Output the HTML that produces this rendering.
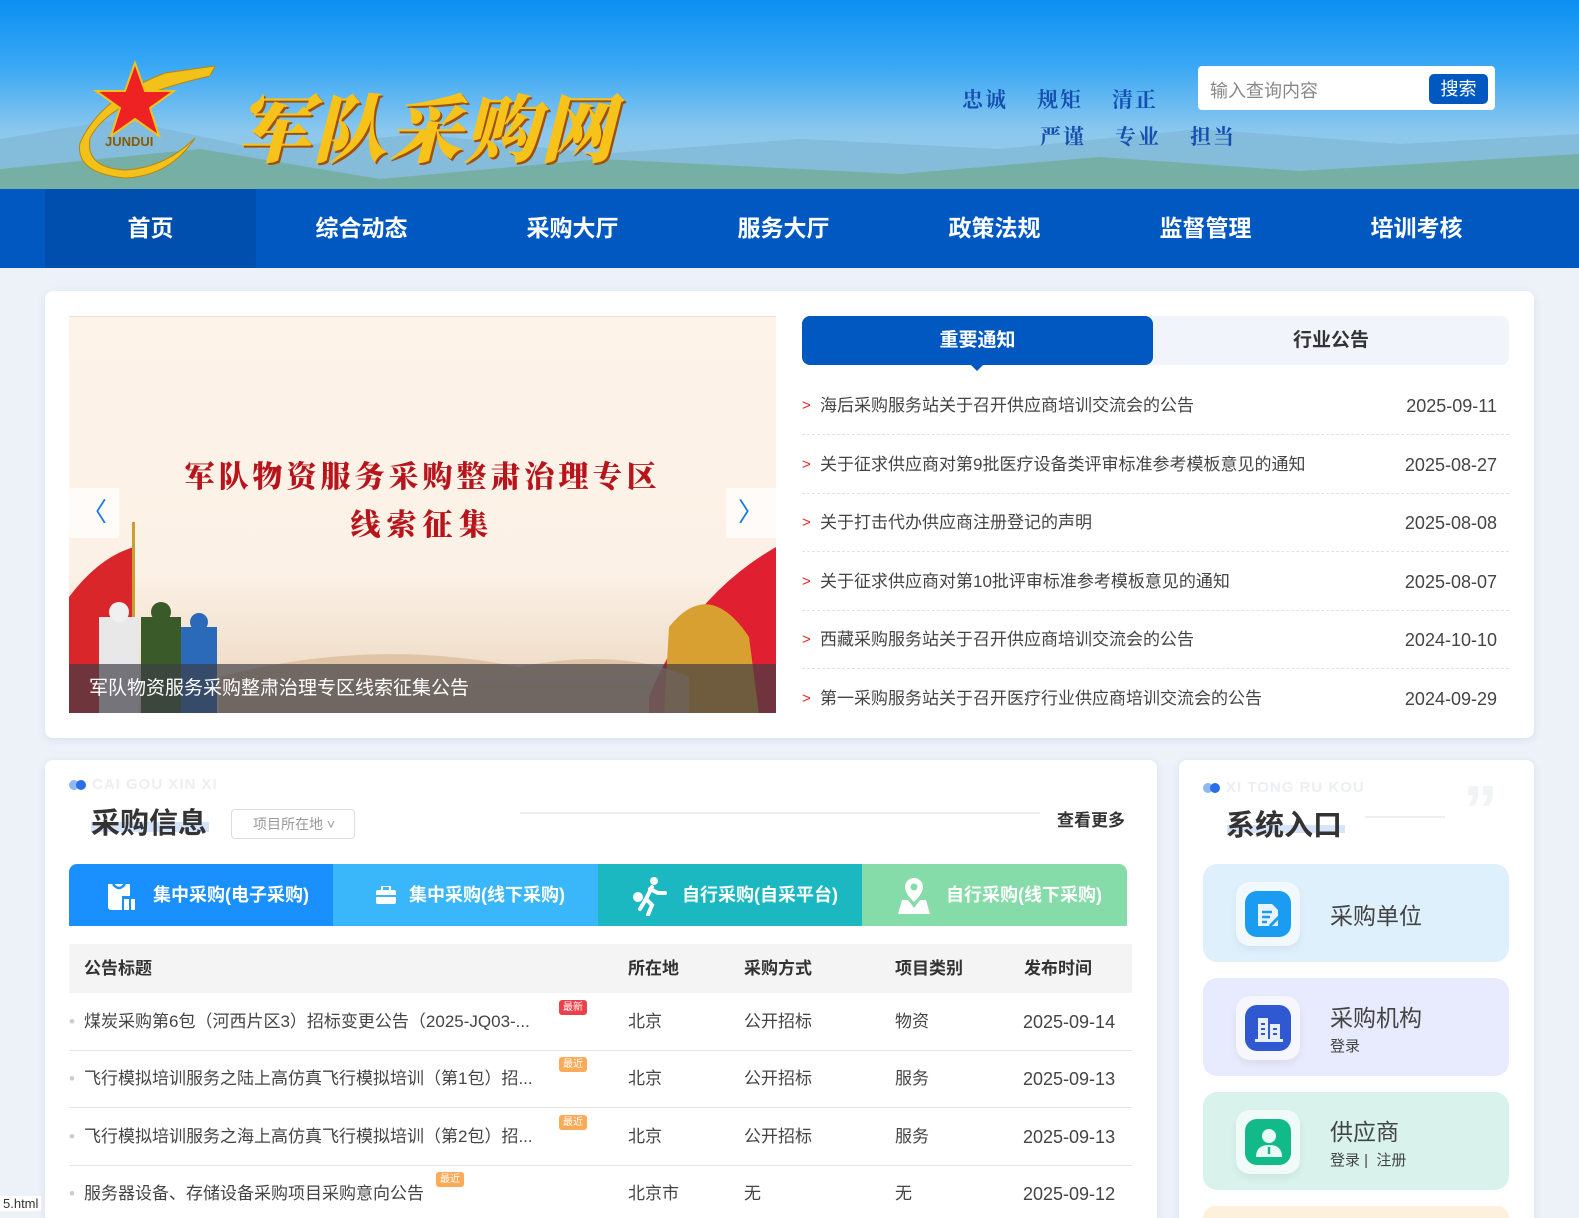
<!DOCTYPE html>
<html><head><meta charset="utf-8">
<style>
*{margin:0;padding:0;box-sizing:border-box}
html{width:1579px;height:1218px;overflow:hidden}
body{width:1579px;height:1218px;overflow:hidden;background:#edf1f8;font-family:"Liberation Sans","Noto Sans CJK SC",sans-serif;color:#333;position:relative}
.abs{position:absolute}
.hdr{left:0;top:0;width:1579px;height:189px;background:linear-gradient(180deg,#0a8ff2 0%,#3aa8f4 35%,#8cc8ee 70%,#9cc8d8 100%);overflow:hidden}
.mtn{position:absolute;left:0;bottom:0;width:1579px;height:80px}
.nav{left:0;top:189px;width:1579px;height:79px;background:#0058c0}
.nav a{position:absolute;top:0;height:79px;width:211px;line-height:79px;text-align:center;color:#fff;font-size:23px;font-weight:bold;text-decoration:none}
.card{background:#fff;border-radius:8px;box-shadow:0 2px 8px rgba(80,110,170,.12)}
.ni{position:absolute;left:802px;width:707px;height:58px;line-height:58px;border-bottom:1px dashed #e2e2e2;font-size:17px;color:#444}
.ni .t{position:absolute;left:18px;top:0}
.ni .g{position:absolute;left:0;top:0;color:#e22;font-size:15px}
.ni .d{position:absolute;right:12px;top:0;color:#444;font-size:18px}
.ptab{position:absolute;top:864px;height:62px;color:#fff;font-size:18px;font-weight:bold;line-height:62px}
.tr{position:absolute;left:69px;width:1063px;height:58px;line-height:58px;border-bottom:1px solid #e6e6e6;font-size:17px;color:#444}
.tr span{position:absolute;top:0}
.tag{position:absolute;font-style:normal;font-size:10px;color:#fff;padding:0 4px;border-radius:3px;line-height:15px}
.ent{position:absolute;left:1203px;width:306px;height:98px;border-radius:14px}
.ent .ic{position:absolute;left:33px;top:18px;width:64px;height:64px;border-radius:14px;background:rgba(255,255,255,.6);box-shadow:0 4px 8px rgba(0,0,0,.06)}
.ent .ic i{position:absolute;left:9px;top:9px;width:46px;height:46px;border-radius:12px}
.ent .n{position:absolute;left:127px;font-size:23px;color:#444}
.ent .s{position:absolute;left:127px;top:57px;font-size:15px;color:#444}
</style></head><body>
<div class="abs hdr">
<svg class="mtn" viewBox="0 0 1579 80" preserveAspectRatio="none"><path d="M0 30 L120 10 L260 40 L420 25 L600 45 L800 30 L1000 40 L1200 20 L1400 35 L1579 25 L1579 80 L0 80Z" fill="#7fb7d6" opacity=".7"/><path d="M0 60 L200 40 L380 70 L600 50 L900 65 L1100 48 L1300 62 L1579 45 L1579 80 L0 80Z" fill="#6fa98e" opacity=".7"/></svg>
<svg class="abs" style="left:70px;top:58px" width="150" height="125" viewBox="0 0 150 125"><path d="M145 8 L95 15 Q30 40 10 85 Q5 115 55 120 Q100 118 125 80 Q95 110 55 112 Q15 110 20 80 Q40 40 140 18Z" fill="#f2c21a" stroke="#b8860b"/><polygon points="65,5 75,33 104,33 80,50 89,78 65,61 41,78 50,50 26,33 55,33" fill="#e22" stroke="#f2c21a" stroke-width="2"/><text x="35" y="88" font-size="13" font-weight="bold" fill="#8a5a00" font-family="Liberation Sans">JUNDUI</text></svg>
<div class="abs" style="left:236px;top:72px;font-size:74px;font-family:'Noto Serif CJK SC',serif;font-weight:900;color:#f7c21a;letter-spacing:2px;font-style:italic;text-shadow:2px 2px 0 #a0500a">军队采购网</div>
<div class="abs" style="left:962px;top:84px;font-size:21px;font-weight:bold;color:#1550b0;font-family:'Noto Serif CJK SC',serif;letter-spacing:2px">忠诚&nbsp;&nbsp;&nbsp;&nbsp;规矩&nbsp;&nbsp;&nbsp;&nbsp;清正</div>
<div class="abs" style="left:1040px;top:121px;font-size:21px;font-weight:bold;color:#1550b0;font-family:'Noto Serif CJK SC',serif;letter-spacing:2px">严谨&nbsp;&nbsp;&nbsp;&nbsp;专业&nbsp;&nbsp;&nbsp;&nbsp;担当</div>
<div class="abs" style="left:1198px;top:66px;width:297px;height:44px;background:#fff;border-radius:4px"><span class="abs" style="left:12px;top:11px;font-size:18px;color:#888">输入查询内容</span><span class="abs" style="left:231px;top:8px;width:59px;height:30px;background:#0058c0;border-radius:5px;color:#fff;font-size:18px;line-height:30px;text-align:center">搜索</span></div>
</div>
<div class="abs nav">
<a style="left:45px;background:#004fae">首页</a><a style="left:256px">综合动态</a><a style="left:467px">采购大厅</a><a style="left:678px">服务大厅</a><a style="left:889px">政策法规</a><a style="left:1100px">监督管理</a><a style="left:1311px">培训考核</a>
</div>
<div class="abs card" style="left:45px;top:291px;width:1489px;height:447px"></div>
<div class="abs" style="left:69px;top:316px;width:707px;height:397px;background:linear-gradient(180deg,#fdf3e8 0%,#fcf1e6 65%,#e9d4bb 100%);overflow:hidden;border-top:1px solid #e8e0d8">
<div class="abs" style="left:0;top:135px;width:707px;text-align:center;font-size:30px;font-weight:900;color:#b8141c;letter-spacing:4px;font-family:'Noto Serif CJK SC',serif">军队物资服务采购整肃治理专区</div>
<div class="abs" style="left:0;top:183px;width:707px;text-align:center;font-size:30px;font-weight:900;color:#b8141c;letter-spacing:6px;font-family:'Noto Serif CJK SC',serif">线索征集</div>
<svg class="abs" style="left:0;top:200px" width="707" height="197" viewBox="0 0 707 197"><path d="M0 80 Q30 40 65 30 L65 197 L0 197Z" fill="#d8262a"/><rect x="63" y="5" width="3" height="190" fill="#c8a030"/><rect x="30" y="100" width="40" height="97" fill="#e8e8e8"/><rect x="72" y="100" width="40" height="97" fill="#3a5a2a"/><rect x="112" y="110" width="36" height="87" fill="#2a6ab8"/><circle cx="50" cy="95" r="10" fill="#f0f0f0"/><circle cx="92" cy="95" r="10" fill="#3a5a2a"/><circle cx="130" cy="105" r="9" fill="#2a6ab8"/><path d="M580 180 Q620 80 707 30 L707 197 L580 197Z" fill="#e02030"/><path d="M600 110 Q640 60 680 120 L690 197 L595 197Z" fill="#d8a030"/><path d="M150 160 Q300 120 450 150 Q550 130 620 160 L620 197 L150 197Z" fill="#d9b896" opacity=".7"/></svg>
<div class="abs" style="left:0;top:171px;width:50px;height:50px;background:rgba(255,255,255,.7);color:#1a7ae0;font-size:26px;text-align:center;line-height:48px">〈</div>
<div class="abs" style="left:657px;top:171px;width:50px;height:50px;background:rgba(255,255,255,.7);color:#1a7ae0;font-size:26px;text-align:center;line-height:48px">〉</div>
<div class="abs" style="left:0;top:347px;width:707px;height:50px;background:rgba(60,60,70,.68);color:#fff;font-size:19px;line-height:50px;padding-left:20px">军队物资服务采购整肃治理专区线索征集公告</div>
</div>
<div class="abs" style="left:802px;top:316px;width:707px;height:49px;background:#f1f5fb;border-radius:8px"></div>
<div class="abs" style="left:802px;top:316px;width:351px;height:49px;background:#0058c0;border-radius:8px;color:#fff;font-size:19px;font-weight:bold;text-align:center;line-height:49px">重要通知</div>
<div class="abs" style="left:970px;top:364px;width:0;height:0;border:7px solid transparent;border-top-color:#0058c0"></div>
<div class="abs" style="left:1153px;top:316px;width:356px;height:49px;color:#333;font-size:19px;font-weight:bold;text-align:center;line-height:49px">行业公告</div>
<div class="ni" style="top:377px"><span class="g">&gt;</span><span class="t">海后采购服务站关于召开供应商培训交流会的公告</span><span class="d">2025-09-11</span></div>
<div class="ni" style="top:436px"><span class="g">&gt;</span><span class="t">关于征求供应商对第9批医疗设备类评审标准参考模板意见的通知</span><span class="d">2025-08-27</span></div>
<div class="ni" style="top:494px"><span class="g">&gt;</span><span class="t">关于打击代办供应商注册登记的声明</span><span class="d">2025-08-08</span></div>
<div class="ni" style="top:553px"><span class="g">&gt;</span><span class="t">关于征求供应商对第10批评审标准参考模板意见的通知</span><span class="d">2025-08-07</span></div>
<div class="ni" style="top:611px"><span class="g">&gt;</span><span class="t">西藏采购服务站关于召开供应商培训交流会的公告</span><span class="d">2024-10-10</span></div>
<div class="ni" style="top:670px;border:none"><span class="g">&gt;</span><span class="t">第一采购服务站关于召开医疗行业供应商培训交流会的公告</span><span class="d">2024-09-29</span></div>

<div class="abs card" style="left:45px;top:760px;width:1112px;height:470px"></div>
<div class="abs" style="left:69px;top:780px;width:10px;height:10px;border-radius:50%;background:#8fb8f5"></div><div class="abs" style="left:76px;top:780px;width:10px;height:10px;border-radius:50%;background:#2a6ee8"></div>
<div class="abs" style="left:92px;top:776px;font-size:15px;font-weight:bold;color:#eceef2;letter-spacing:1px">CAI GOU XIN XI</div>
<div class="abs" style="left:91px;top:822px;width:118px;height:10px;background:#d6e4fb"></div>
<div class="abs" style="left:91px;top:800px;font-size:29px;font-weight:bold;color:#333">采购信息</div>
<div class="abs" style="left:231px;top:809px;width:124px;height:30px;border:1px solid #ddd;border-radius:4px;font-size:14px;color:#999;line-height:28px;padding-left:21px">项目所在地 ˅</div>
<div class="abs" style="left:520px;top:812px;width:520px;height:2px;background:#eee"></div>
<div class="abs" style="left:1057px;top:806px;font-size:17px;font-weight:bold;color:#333">查看更多</div>
<div class="ptab" style="left:69px;width:264px;background:#1a90ff;border-radius:8px 0 0 0;padding-left:84px">集中采购(电子采购)
<svg class="abs" style="left:36px;top:16px" width="32" height="32" viewBox="0 0 32 32"><path d="M3 4 h22 v12 h-8 v14 H6 a3 3 0 0 1-3-3Z" fill="#fff"/><path d="M8 4 q6 8 12 0" stroke="#1a90ff" stroke-width="2.5" fill="none"/><rect x="19" y="19" width="5" height="11" fill="#fff"/><rect x="26" y="19" width="4" height="11" fill="#fff"/></svg></div>
<div class="ptab" style="left:333px;width:265px;background:#3ab6fb;padding-left:76px">集中采购(线下采购)
<svg class="abs" style="left:43px;top:22px" width="20" height="18" viewBox="0 0 20 18"><rect x="0" y="4" width="20" height="14" rx="2" fill="#fff"/><rect x="6" y="0" width="8" height="5" rx="1" fill="none" stroke="#fff" stroke-width="2"/><rect x="0" y="9" width="20" height="2" fill="#3ab6fb"/></svg></div>
<div class="ptab" style="left:598px;width:264px;background:#1cb8c2;padding-left:84px">自行采购(自采平台)
<svg class="abs" style="left:32px;top:12px" width="38" height="40" viewBox="0 0 38 40"><circle cx="24" cy="5" r="4" fill="#fff"/><path d="M22 11 l-6 12 l6 6 l-4 10 M20 13 l8 4 l7 0 M16 23 l-6 10" stroke="#fff" stroke-width="4" fill="none" stroke-linecap="round"/><circle cx="8" cy="21" r="5" fill="#fff"/></svg></div>
<div class="ptab" style="left:862px;width:265px;background:#85dca8;border-radius:0 8px 0 0;padding-left:84px">自行采购(线下采购)
<svg class="abs" style="left:36px;top:14px" width="32" height="36" viewBox="0 0 32 36"><path d="M16 0 a9 9 0 0 1 9 9 c0 7-9 15-9 15 s-9-8-9-15 a9 9 0 0 1 9-9Z" fill="#fff"/><circle cx="16" cy="9" r="3.5" fill="#85dca8"/><path d="M4 22 L0 36 L32 36 L28 22 L22 22 L16 30 L10 22Z" fill="#fff"/></svg></div>
<div class="abs" style="left:69px;top:944px;width:1063px;height:49px;background:#f4f4f4;font-size:17px;font-weight:bold;color:#333;line-height:49px">
<span class="abs" style="left:15px">公告标题</span><span class="abs" style="left:559px">所在地</span><span class="abs" style="left:675px">采购方式</span><span class="abs" style="left:826px">项目类别</span><span class="abs" style="left:955px">发布时间</span></div>
<div class="tr" style="top:993px"><span style="left:0;color:#ccc">•</span><span style="left:15px">煤炭采购第6包（河西片区3）招标变更公告（2025-JQ03-...</span><i class="tag" style="left:490px;top:7px;background:#e8424b">最新</i><span style="left:559px">北京</span><span style="left:675px">公开招标</span><span style="left:826px">物资</span><span style="left:954px;font-size:18px">2025-09-14</span></div>
<div class="tr" style="top:1050px"><span style="left:0;color:#ccc">•</span><span style="left:15px">飞行模拟培训服务之陆上高仿真飞行模拟培训（第1包）招...</span><i class="tag" style="left:490px;top:7px;background:#fbaa57">最近</i><span style="left:559px">北京</span><span style="left:675px">公开招标</span><span style="left:826px">服务</span><span style="left:954px;font-size:18px">2025-09-13</span></div>
<div class="tr" style="top:1108px"><span style="left:0;color:#ccc">•</span><span style="left:15px">飞行模拟培训服务之海上高仿真飞行模拟培训（第2包）招...</span><i class="tag" style="left:490px;top:7px;background:#fbaa57">最近</i><span style="left:559px">北京</span><span style="left:675px">公开招标</span><span style="left:826px">服务</span><span style="left:954px;font-size:18px">2025-09-13</span></div>
<div class="tr" style="top:1165px;border:none"><span style="left:0;color:#ccc">•</span><span style="left:15px">服务器设备、存储设备采购项目采购意向公告</span><i class="tag" style="left:367px;top:7px;background:#fbaa57">最近</i><span style="left:559px">北京市</span><span style="left:675px">无</span><span style="left:826px">无</span><span style="left:954px;font-size:18px">2025-09-12</span></div>
<div class="abs" style="left:0;top:1196px;font-size:13px;color:#333;background:#fff;padding:0 3px">5.html</div>

<div class="abs card" style="left:1179px;top:760px;width:355px;height:470px"></div>
<div class="abs" style="left:1203px;top:783px;width:10px;height:10px;border-radius:50%;background:#8fb8f5"></div><div class="abs" style="left:1210px;top:783px;width:10px;height:10px;border-radius:50%;background:#2a6ee8"></div>
<div class="abs" style="left:1226px;top:779px;font-size:15px;font-weight:bold;color:#eceef2;letter-spacing:1px">XI TONG RU KOU</div>
<div class="abs" style="left:1463px;top:775px;font-size:70px;font-weight:bold;color:#f2f3f6;line-height:70px">”</div>
<div class="abs" style="left:1227px;top:825px;width:118px;height:8px;background:#d6e4fb"></div>
<div class="abs" style="left:1226px;top:802px;font-size:29px;font-weight:bold;color:#333">系统入口</div>
<div class="abs" style="left:1365px;top:816px;width:80px;height:2px;background:#eee"></div>
<div class="ent" style="top:864px;background:#dff0fd"><div class="ic"><i style="background:#1a9cf0"></i><svg class="abs" style="left:20px;top:20px" width="26" height="26" viewBox="0 0 26 26"><path d="M2 2 h14 l6 6 v16 H2Z" fill="#e8f3ff"/><path d="M6 10 h10 M6 15 h8 M6 20 h5" stroke="#1a9cf0" stroke-width="2.5"/><path d="M14 24 l10-10" stroke="#1a9cf0" stroke-width="3"/></svg></div><div class="n" style="top:33px">采购单位</div></div>
<div class="ent" style="top:978px;background:#e8eafd"><div class="ic"><i style="background:#3058d0"></i><svg class="abs" style="left:19px;top:20px" width="28" height="26" viewBox="0 0 28 26"><rect x="3" y="2" width="10" height="22" fill="#e8eefc"/><rect x="15" y="8" width="10" height="16" fill="#e8eefc"/><rect x="0" y="23" width="28" height="3" fill="#e8eefc"/><path d="M6 8h4M6 13h4M6 18h4M18 13h4M18 18h4" stroke="#3058d0" stroke-width="2"/></svg></div><div class="n" style="top:21px">采购机构</div><div class="s">登录</div></div>
<div class="ent" style="top:1092px;background:#d9f3ec"><div class="ic"><i style="background:#12ba8a"></i><svg class="abs" style="left:19px;top:18px" width="28" height="30" viewBox="0 0 28 30"><circle cx="14" cy="8" r="7" fill="#e8fbf4"/><path d="M1 29 q0-12 13-12 q13 0 13 12Z" fill="#e8fbf4"/><path d="M14 19 v7" stroke="#12ba8a" stroke-width="2.5"/></svg></div><div class="n" style="top:21px">供应商</div><div class="s">登录 |&nbsp; 注册</div></div>
<div class="ent" style="top:1206px;height:12px;border-radius:14px 14px 0 0;background:#fdf0dc"></div>
</body></html>
